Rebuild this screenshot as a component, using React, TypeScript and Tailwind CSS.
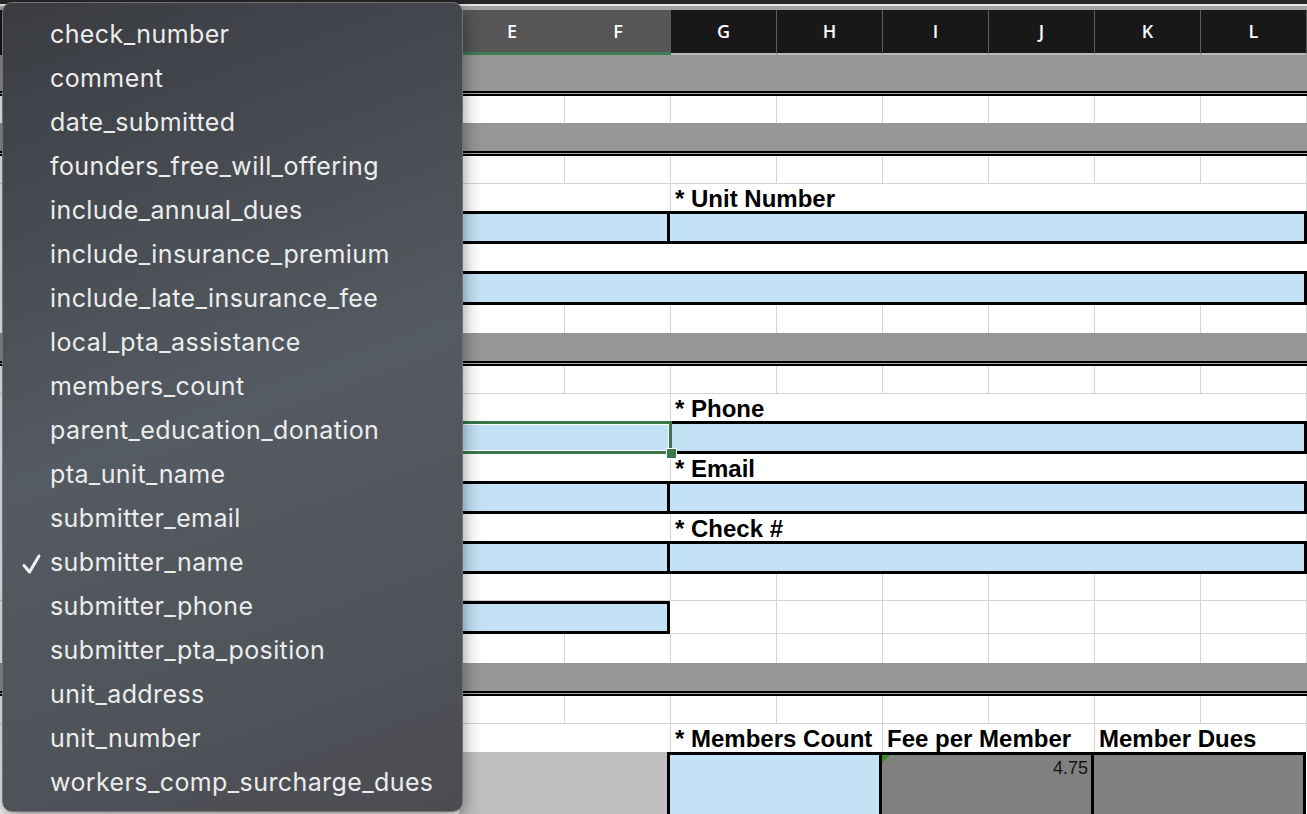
import React from "react";

const items = [
  "check_number",
  "comment",
  "date_submitted",
  "founders_free_will_offering",
  "include_annual_dues",
  "include_insurance_premium",
  "include_late_insurance_fee",
  "local_pta_assistance",
  "members_count",
  "parent_education_donation",
  "pta_unit_name",
  "submitter_email",
  "submitter_name",
  "submitter_phone",
  "submitter_pta_position",
  "unit_address",
  "unit_number",
  "workers_comp_surcharge_dues",
];

const BLUE = "bg-[#c3e2f5]";

function Spacer() {
  return <div className="w-[459px] shrink-0" />;
}

function WhiteRow({ h, lines, bottom }: { h: string; lines: boolean[]; bottom?: boolean }) {
  return (
    <div className={`flex bg-white ${h} ${bottom ? "border-b border-[#d4d4d4]" : ""}`}>
      <Spacer />
      {lines.map((l, i) => (
        <div
          key={i}
          className={`w-[106px] shrink-0 border-r ${l ? "border-[#d4d4d4]" : "border-white"}`}
        />
      ))}
    </div>
  );
}

const ALL = [true, true, true, true, true, true, true, true];

function GrayBand({ h }: { h: string }) {
  return (
    <div className={`${h} flex flex-col`}>
      <div className="flex-1 bg-[#969696]" />
      <div className="h-[2px] bg-black" />
      <div className="h-[1px] bg-[#aaaaaa]" />
      <div className="h-[2px] bg-black" />
    </div>
  );
}

function LabelRow({ label }: { label: string }) {
  return (
    <div className="flex h-[27px] bg-white">
      <Spacer />
      <div className="w-[212px] shrink-0 border-r border-[#d4d4d4]" />
      <div className="w-[636px] shrink-0 border-r border-[#d4d4d4] flex items-center pl-[4px] pt-[2px]">
        <span className="font-['Liberation_Sans',Arial,sans-serif] font-bold text-[24px] leading-none text-black whitespace-nowrap">
          {label}
        </span>
      </div>
    </div>
  );
}

function SplitBlue() {
  return (
    <div className="flex h-[33px] bg-white">
      <Spacer />
      <div className={`w-[208px] shrink-0 ${BLUE} border-y-[3px] border-black`} />
      <div className={`w-[640px] shrink-0 ${BLUE} border-[3px] border-black`} />
    </div>
  );
}

function Sheet() {
  return (
    <div className="w-[1307px] bg-white">
      {/* top chrome */}
      <div className="h-[4px] bg-[#262626]" />
      <div className="h-[2px] bg-[#e4e4e4]" />
      <div className="h-[4px] bg-[#a3a3a3]" />
      {/* column headers */}
      <div className="flex h-[45px] font-['Open_Sans',sans-serif] font-semibold text-[18px] text-white">
        <div className="w-[459px] shrink-0 bg-[#181818]" />
        {["E", "F"].map((c) => (
          <div
            key={c}
            className="w-[106px] shrink-0 bg-[#565656] border-b-[3px] border-[#3d7d52] flex items-center justify-center pt-[1px]"
          >
            {c}
          </div>
        ))}
        {["G", "H", "I", "J", "K", "L"].map((c) => (
          <div
            key={c}
            className="w-[106px] shrink-0 bg-[#181818] border-r border-r-[#5c5c5c] border-b-2 border-b-[#b9b9b9] flex items-center justify-center"
          >
            {c}
          </div>
        ))}
      </div>

      <GrayBand h="h-[41px]" />
      <WhiteRow h="h-[27px]" lines={ALL} />
      <GrayBand h="h-[33px]" />
      <WhiteRow h="h-[28px]" lines={ALL} bottom />
      <LabelRow label="* Unit Number" />
      <SplitBlue />
      <WhiteRow h="h-[27px]" lines={[false, false, false, false, false, false, false, false]} />
      <div className="flex h-[34px] bg-white">
        <Spacer />
        <div className={`w-[848px] shrink-0 ${BLUE} border-y-[3px] border-r-[3px] border-black`} />
      </div>
      <WhiteRow h="h-[28px]" lines={ALL} />
      <GrayBand h="h-[33px]" />
      <WhiteRow h="h-[28px]" lines={ALL} bottom />
      <LabelRow label="* Phone" />
      {/* selected row */}
      <div className="flex h-[33px] bg-white">
        <Spacer />
        <div className="relative w-[213px] shrink-0 border-y-[3px] border-r-[3px] border-[#3a774b]">
          <div className={`h-full w-full ${BLUE} border-t border-r border-b border-white`} />
          <div className="absolute right-[-8px] bottom-[-8px] w-[11px] h-[11px] bg-[#3a774b] border border-white" />
        </div>
        <div className={`w-[635px] shrink-0 ${BLUE} border-y-[3px] border-r-[3px] border-black`} />
      </div>
      <LabelRow label="* Email" />
      <SplitBlue />
      <LabelRow label="* Check #" />
      <SplitBlue />
      <WhiteRow h="h-[27px]" lines={[false, true, true, true, true, true, true, true]} bottom />
      <div className="flex h-[33px] bg-white">
        <Spacer />
        <div className={`w-[211px] shrink-0 ${BLUE} border-y-[3px] border-r-[3px] border-black`} />
        <div className="w-[1px] shrink-0" />
        {[0, 1, 2, 3, 4, 5].map((i) => (
          <div key={i} className="w-[106px] shrink-0 border-r border-b border-[#d4d4d4]" />
        ))}
      </div>
      <WhiteRow h="h-[29px]" lines={ALL} />
      <GrayBand h="h-[33px]" />
      <WhiteRow h="h-[28px]" lines={ALL} bottom />
      {/* members labels */}
      <div className="flex h-[28px] bg-white font-['Liberation_Sans',Arial,sans-serif] font-bold text-[24px] leading-none text-black">
        <Spacer />
        <div className="w-[212px] shrink-0 border-r border-[#d4d4d4]" />
        {["* Members Count", "Fee per Member", "Member Dues"].map((t) => (
          <div
            key={t}
            className="w-[212px] shrink-0 border-r border-[#d4d4d4] flex items-center pl-[4px] pt-[2px] whitespace-nowrap overflow-visible"
          >
            {t}
          </div>
        ))}
      </div>
      {/* totals row */}
      <div className="flex h-[62px] bg-white">
        <Spacer />
        <div className="w-[208px] shrink-0 bg-[#bfbfbf]" />
        <div className={`w-[212px] shrink-0 ${BLUE} border-t-[3px] border-l-[3px] border-black`} />
        <div className="relative w-[212px] shrink-0 bg-[#808080] border-t-[3px] border-l-[3px] border-black flex justify-end pr-[3px] pt-[2px]">
          <svg className="absolute left-0 top-0" width="8" height="8" viewBox="0 0 8 8">
            <polygon points="0,0 8,0 0,8" fill="#3b8a22" />
          </svg>
          <span className="font-['Liberation_Sans',Arial,sans-serif] text-[18px] leading-[22px] text-[#151515]">4.75</span>
        </div>
        <div className="w-[215px] shrink-0 bg-[#808080] border-t-[3px] border-x-[3px] border-black" />
      </div>
    </div>
  );
}

function Menu() {
  return (
    <div className="absolute left-[2px] top-[2px] w-[461px] h-[810px] rounded-[10px] border border-[#737376] bg-[linear-gradient(160deg,#3a3c41_0%,#4a4e55_30%,#555b63_50%,#50545b_75%,#4b4c51_100%)] shadow-[0_6px_18px_rgba(0,0,0,0.45)] pt-[10px]">
      {items.map((t) => (
        <div
          key={t}
          className="relative h-[44px] flex items-center pl-[47px] font-['Inter',sans-serif] text-[25px] text-[#ececec] tracking-[0.4px]"
        >
          {t === "submitter_name" && (
            <svg className="absolute left-[18px] top-[12px]" width="22" height="22" viewBox="0 0 22 22">
              <path d="M3 12.5 L8.5 19 L18 3" fill="none" stroke="#f2f2f2" strokeWidth="3" strokeLinecap="round" strokeLinejoin="round" />
            </svg>
          )}
          {t}
        </div>
      ))}
    </div>
  );
}

export default function App() {
  return (
    <div className="relative w-[1307px] h-[814px] overflow-hidden bg-white">
      <Sheet />
      <Menu />
    </div>
  );
}
